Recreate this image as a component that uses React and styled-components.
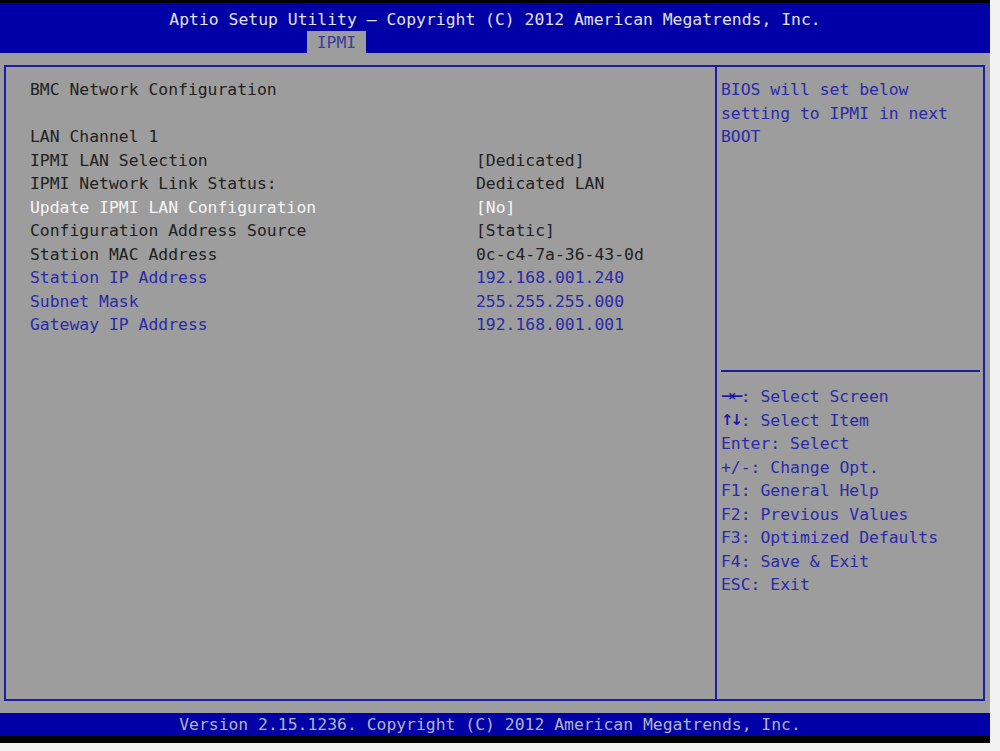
import React from 'react';
import styled, { createGlobalStyle } from 'styled-components';

const GlobalStyle = createGlobalStyle`
  html, body {
    margin: 0;
    padding: 0;
    background: #f2f2f2;
  }
  * {
    box-sizing: border-box;
  }
`;

const Screen = styled.div`
  width: 990px;
  display: flex;
  flex-direction: column;
  font-family: 'DejaVu Sans Mono', 'Liberation Mono', monospace;
  font-size: 16.4px;
  background: #000;
  padding: 3px 0 7px 0;
`;

const Header = styled.div`
  height: 50px;
  background: #0000a6;
  display: flex;
  flex-direction: column;
`;
const Title = styled.div`
  color: #e2e2e2;
  text-align: center;
  height: 28px;
  line-height: 20px;
  padding-top: 7px;
`;
const TabBar = styled.div`
  display: flex;
  padding-left: 307px;
  height: 22px;
`;
const Tab = styled.div`
  width: 59px;
  height: 22px;
  background: #9d9d9d;
  color: #3a3aa0;
  display: flex;
  justify-content: center;
  align-items: center;
  padding-top: 1px;
`;

const Body = styled.div`
  height: 660px;
  background: #9d9d9d;
  padding: 12px 5px 12px 4px;
`;
const Frame = styled.div`
  height: 100%;
  border: 2px solid #1c1ca6;
  display: flex;
`;
const MainPanel = styled.div`
  width: 711px;
  border-right: 2px solid #1c1ca6;
  padding: 11px 0 0 24px;
`;
const Grid = styled.div`
  display: grid;
  grid-template-columns: 446px 1fr;
  line-height: 23.5px;
`;
const Cell = styled.div`
  white-space: pre;
  color: ${(p) => (p.tone === 'white' ? '#f6f6f6' : p.tone === 'blue' ? '#2a2aaa' : '#222')};
  ${(p) => p.wide && 'grid-column: 1 / 3;'}
`;

const SidePanel = styled.div`
  flex: 1;
  display: flex;
  flex-direction: column;
  padding: 11px 3px 0 4px;
`;
const HelpText = styled.div`
  color: #2a2aaa;
  line-height: 23.5px;
  height: 292px;
`;
const Separator = styled.div`
  height: 2px;
  background: #1c1ca6;
`;
const KeyList = styled.div`
  color: #2a2aaa;
  line-height: 23.5px;
  padding-top: 13px;
  white-space: pre;
`;
const KeyRow = styled.div`
  height: 23.5px;
`;
const Arrows = styled.span`
  display: inline-block;
  vertical-align: top;
  width: 19.7px;
  height: 23.5px;
  line-height: 23.5px;
  font-family: 'DejaVu Sans', sans-serif;
  font-weight: bold;
  font-size: 15px;
  letter-spacing: -3px;
  color: #1c1ca6;
`;

const Footer = styled.div`
  height: 23px;
  background: #0000a6;
  color: #b4b4c2;
  text-align: center;
  line-height: 23px;
  padding-right: 10px;
`;

const rows = [
  { label: 'BMC Network Configuration', wide: true },
  { label: ' ', wide: true },
  { label: 'LAN Channel 1', wide: true },
  { label: 'IPMI LAN Selection', value: '[Dedicated]' },
  { label: 'IPMI Network Link Status:', value: 'Dedicated LAN' },
  { label: 'Update IPMI LAN Configuration', value: '[No]', tone: 'white' },
  { label: 'Configuration Address Source', value: '[Static]' },
  { label: 'Station MAC Address', value: '0c-c4-7a-36-43-0d' },
  { label: 'Station IP Address', value: '192.168.001.240', tone: 'blue' },
  { label: 'Subnet Mask', value: '255.255.255.000', tone: 'blue' },
  { label: 'Gateway IP Address', value: '192.168.001.001', tone: 'blue' },
];

const keys = [
  'Enter: Select',
  '+/-: Change Opt.',
  'F1: General Help',
  'F2: Previous Values',
  'F3: Optimized Defaults',
  'F4: Save & Exit',
  'ESC: Exit',
];

const App = () => (
  <>
    <GlobalStyle />
    <Screen>
      <Header>
        <Title>Aptio Setup Utility – Copyright (C) 2012 American Megatrends, Inc.</Title>
        <TabBar>
          <Tab>IPMI</Tab>
        </TabBar>
      </Header>
      <Body>
        <Frame>
          <MainPanel>
            <Grid>
              {rows.map((r, i) =>
                r.wide ? (
                  <Cell key={i} wide>
                    {r.label}
                  </Cell>
                ) : (
                  <React.Fragment key={i}>
                    <Cell tone={r.tone}>{r.label}</Cell>
                    <Cell tone={r.tone}>{r.value}</Cell>
                  </React.Fragment>
                )
              )}
            </Grid>
          </MainPanel>
          <SidePanel>
            <HelpText>
              BIOS will set below
              <br />
              setting to IPMI in next
              <br />
              BOOT
            </HelpText>
            <Separator />
            <KeyList>
              <KeyRow>
                <Arrows>→←</Arrows>: Select Screen
              </KeyRow>
              <KeyRow>
                <Arrows>↑↓</Arrows>: Select Item
              </KeyRow>
              {keys.map((k) => (
                <KeyRow key={k}>{k}</KeyRow>
              ))}
            </KeyList>
          </SidePanel>
        </Frame>
      </Body>
      <Footer>Version 2.15.1236. Copyright (C) 2012 American Megatrends, Inc.</Footer>
    </Screen>
  </>
);

export default App;
